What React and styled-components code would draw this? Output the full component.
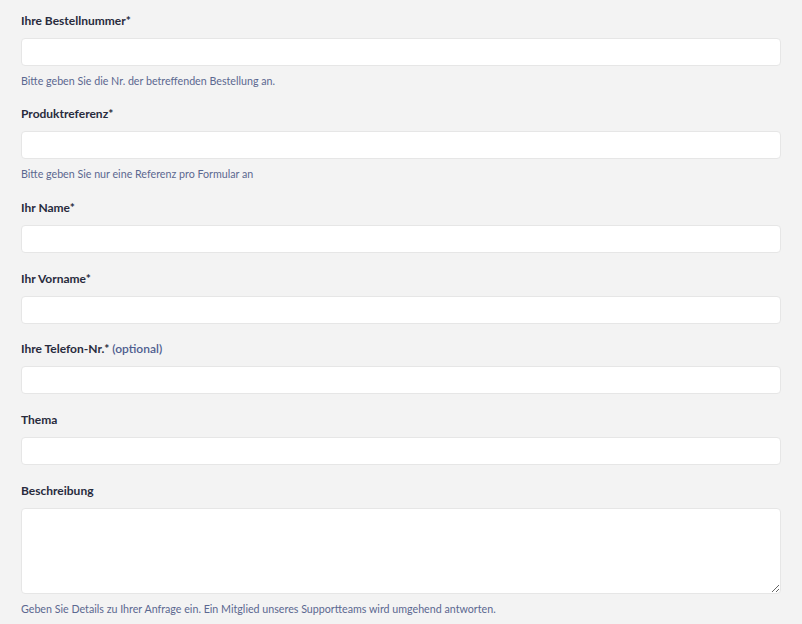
import React from "react";
import styled, { createGlobalStyle } from "styled-components";

const Global = createGlobalStyle`
  html, body { margin: 0; padding: 0; background: #f3f3f3; }
  body { font-family: Lato, "Open Sans", sans-serif; }
  * { box-sizing: border-box; }
`;

const Form = styled.form`
  padding: 10.75px 21px 0 21px;
  min-height: 624px;
  background: #f3f3f3;
`;

const Group = styled.div`
  display: flex;
  flex-direction: column;
  margin-bottom: 15.75px;
`;

const Label = styled.label`
  font-size: 12px;
  font-weight: 700;
  line-height: 18px;
  padding-top: 1px;
  color: #282b3d;
  margin-bottom: 8px;
`;

const Optional = styled.span`
  font-weight: 600;
  color: #4e5d8f;
`;

const Input = styled.input`
  height: 28px;
  width: 100%;
  border: 1px solid #e6e6e6;
  border-radius: 4px;
  background: #fff;
  font-family: inherit;
  outline: none;
`;

const TextArea = styled.textarea`
  height: 86px;
  width: 100%;
  border: 1px solid #e6e6e6;
  border-radius: 4px;
  background: #fff;
  font-family: inherit;
  resize: vertical;
  display: block;
  outline: none;
`;

const Help = styled.small`
  display: block;
  font-size: 10.7px;
  line-height: 16px;
  margin-top: 6.75px;
  color: #5b6890;
`;

const fields = [
  { label: "Ihre Bestellnummer*", help: "Bitte geben Sie die Nr. der betreffenden Bestellung an." },
  { label: "Produktreferenz*", help: "Bitte geben Sie nur eine Referenz pro Formular an" },
  { label: "Ihr Name*" },
  { label: "Ihr Vorname*" },
  { label: "Ihre Telefon-Nr.*", optional: true },
  { label: "Thema" },
];

export default function App() {
  return (
    <>
      <Global />
      <Form>
        {fields.map((f) => (
          <Group key={f.label}>
            <Label>
              {f.label}
              {f.optional && <Optional> (optional)</Optional>}
            </Label>
            <Input type="text" />
            {f.help && <Help>{f.help}</Help>}
          </Group>
        ))}
        <Group>
          <Label>Beschreibung</Label>
          <TextArea />
          <Help>Geben Sie Details zu Ihrer Anfrage ein. Ein Mitglied unseres Supportteams wird umgehend antworten.</Help>
        </Group>
      </Form>
    </>
  );
}
